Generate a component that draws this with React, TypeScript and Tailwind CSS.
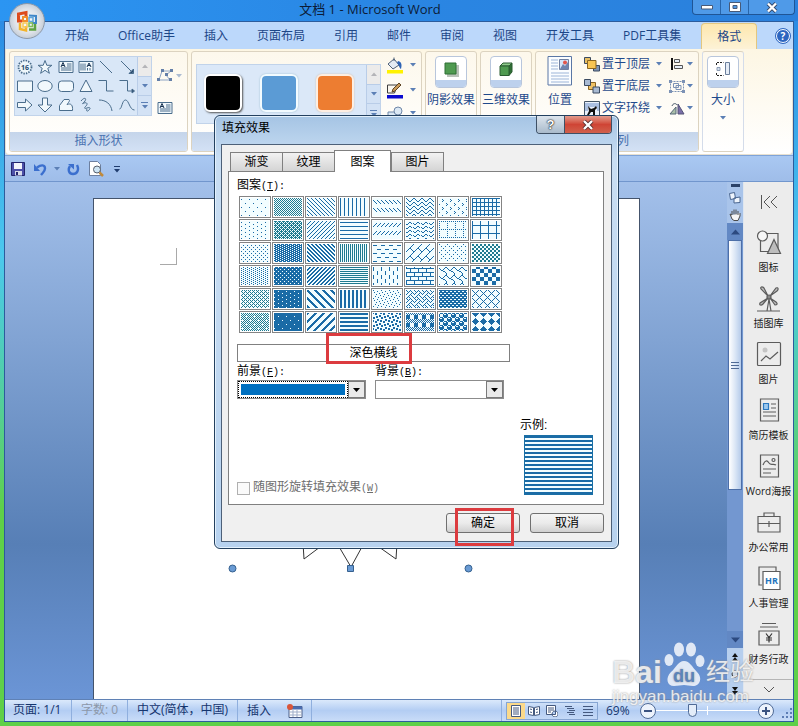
import { useId, useState, type ReactNode } from "react";
import clsx from "clsx";

const uiFont = "font-['Open_Sans','Noto_Sans_CJK_SC',sans-serif]";

const ribbonTabs = [
  "开始",
  "Office助手",
  "插入",
  "页面布局",
  "引用",
  "邮件",
  "审阅",
  "视图",
  "开发工具",
  "PDF工具集",
];

// 8x8 hatch bitmaps, one byte per row, listed in the order of the picker rows
const hatches: { name: string; rows: number[]; teal?: boolean }[] = [
  { name: "5%", rows: [0x00, 0x80, 0x00, 0x00, 0x00, 0x08, 0x00, 0x00] },
  { name: "50%", rows: [0xaa, 0x55, 0xaa, 0x55, 0xaa, 0x55, 0xaa, 0x55], teal: true },
  { name: "浅色下对角线", rows: [0x88, 0x44, 0x22, 0x11, 0x88, 0x44, 0x22, 0x11] },
  { name: "浅色竖线", rows: [0x88, 0x88, 0x88, 0x88, 0x88, 0x88, 0x88, 0x88] },
  { name: "下对角虚线", rows: [0x00, 0x00, 0x88, 0x44, 0x22, 0x11, 0x00, 0x00] },
  { name: "之字形", rows: [0x81, 0x42, 0x24, 0x18, 0x81, 0x42, 0x24, 0x18] },
  { name: "草皮", rows: [0x00, 0x10, 0x08, 0x10, 0x00, 0x01, 0x80, 0x01] },
  { name: "小网格", rows: [0xff, 0x88, 0x88, 0x88, 0xff, 0x88, 0x88, 0x88] },

  { name: "10%", rows: [0x00, 0x80, 0x00, 0x08, 0x00, 0x80, 0x00, 0x08] },
  { name: "60%", rows: [0xee, 0x55, 0xbb, 0x55, 0xee, 0x55, 0xbb, 0x55], teal: true },
  { name: "浅色上对角线", rows: [0x11, 0x22, 0x44, 0x88, 0x11, 0x22, 0x44, 0x88] },
  { name: "浅色横线", rows: [0x00, 0xff, 0x00, 0x00, 0x00, 0xff, 0x00, 0x00] },
  { name: "上对角虚线", rows: [0x00, 0x00, 0x11, 0x22, 0x44, 0x88, 0x00, 0x00] },
  { name: "波浪线", rows: [0x00, 0x18, 0x25, 0xc0, 0x00, 0x18, 0x25, 0xc0] },
  { name: "虚线网格", rows: [0xaa, 0x00, 0x80, 0x00, 0x80, 0x00, 0x80, 0x00] },
  { name: "大网格", rows: [0x80, 0x80, 0x80, 0x80, 0xff, 0x80, 0x80, 0x80] },

  { name: "20%", rows: [0x00, 0x22, 0x00, 0x88, 0x00, 0x22, 0x00, 0x88] },
  { name: "70%", rows: [0xdd, 0x77, 0xdd, 0x77, 0xdd, 0x77, 0xdd, 0x77] },
  { name: "深色下对角线", rows: [0xcc, 0x66, 0x33, 0x99, 0xcc, 0x66, 0x33, 0x99] },
  { name: "窄竖线", rows: [0xaa, 0xaa, 0xaa, 0xaa, 0xaa, 0xaa, 0xaa, 0xaa], teal: true },
  { name: "横虚线", rows: [0x00, 0xf0, 0x00, 0x00, 0x00, 0x0f, 0x00, 0x00] },
  { name: "对角砖形", rows: [0x01, 0x02, 0x04, 0x08, 0x18, 0x24, 0x42, 0x81] },
  { name: "点式菱形", rows: [0x80, 0x00, 0x22, 0x00, 0x08, 0x00, 0x22, 0x00] },
  { name: "小棋盘", rows: [0xcc, 0xcc, 0x33, 0x33, 0xcc, 0xcc, 0x33, 0x33], teal: true },

  { name: "25%", rows: [0x22, 0x88, 0x22, 0x88, 0x22, 0x88, 0x22, 0x88] },
  { name: "75%", rows: [0x77, 0xff, 0xdd, 0xff, 0x77, 0xff, 0xdd, 0xff] },
  { name: "深色上对角线", rows: [0x33, 0x66, 0xcc, 0x99, 0x33, 0x66, 0xcc, 0x99] },
  { name: "窄横线", rows: [0xff, 0x00, 0xff, 0x00, 0xff, 0x00, 0xff, 0x00], teal: true },
  { name: "竖虚线", rows: [0x80, 0x80, 0x80, 0x80, 0x08, 0x08, 0x08, 0x08] },
  { name: "横向砖形", rows: [0x80, 0xff, 0x08, 0x08, 0x08, 0xff, 0x80, 0x80] },
  { name: "瓦形", rows: [0x03, 0x84, 0x48, 0x30, 0x0c, 0x02, 0x01, 0x01] },
  { name: "大棋盘", rows: [0x0f, 0x0f, 0xf0, 0xf0, 0xf0, 0xf0, 0x0f, 0x0f] },

  { name: "30%", rows: [0x55, 0x88, 0x55, 0x22, 0x55, 0x88, 0x55, 0x22], teal: true },
  { name: "80%", rows: [0xff, 0xf7, 0xff, 0x7f, 0xff, 0xf7, 0xff, 0x7f] },
  { name: "宽下对角线", rows: [0xc1, 0xe0, 0x70, 0x38, 0x1c, 0x0e, 0x07, 0x83] },
  { name: "深色竖线", rows: [0xcc, 0xcc, 0xcc, 0xcc, 0xcc, 0xcc, 0xcc, 0xcc] },
  { name: "小纸屑", rows: [0x80, 0x08, 0x40, 0x02, 0x10, 0x01, 0x20, 0x04] },
  { name: "编织物", rows: [0x88, 0x54, 0x22, 0x45, 0x88, 0x14, 0x22, 0x51] },
  { name: "棚架", rows: [0xff, 0x66, 0xff, 0x99, 0xff, 0x66, 0xff, 0x99] },
  { name: "轮廓式菱形", rows: [0x82, 0x44, 0x28, 0x10, 0x28, 0x44, 0x82, 0x01] },

  { name: "40%", rows: [0xaa, 0x55, 0xaa, 0x51, 0xaa, 0x55, 0xaa, 0x15], teal: true },
  { name: "90%", rows: [0xff, 0xff, 0xff, 0xf7, 0xff, 0xff, 0xff, 0x7f] },
  { name: "宽上对角线", rows: [0xc1, 0x83, 0x07, 0x0e, 0x1c, 0x38, 0x70, 0xe0] },
  { name: "深色横线", rows: [0xff, 0xff, 0x00, 0x00, 0xff, 0xff, 0x00, 0x00] },
  { name: "大纸屑", rows: [0xb1, 0x30, 0x03, 0x1b, 0xd8, 0xc0, 0x0c, 0x8d] },
  { name: "苏格兰方格呢", rows: [0xaa, 0x55, 0xf0, 0xf0, 0xf0, 0xf0, 0xaa, 0x55] },
  { name: "球体", rows: [0x77, 0x89, 0x8f, 0x8f, 0x77, 0x98, 0xf8, 0xf8] },
  { name: "实心菱形", rows: [0xfe, 0x7c, 0x38, 0x10, 0x00, 0x10, 0x38, 0x7c] },
];

function Hatch({ rows, teal }: { rows: number[]; teal?: boolean }) {
  const id = useId();
  let d = "";
  rows.forEach((row, y) => {
    for (let x = 0; x < 8; x++) {
      if (row & (0x80 >> x)) d += `M${x} ${y}h1v1h-1z`;
    }
  });
  return (
    <svg className="block h-full w-full" shapeRendering="crispEdges">
      <pattern id={id} width="8" height="8" patternUnits="userSpaceOnUse">
        <rect width="8" height="8" fill="#f2fdff" />
        <path d={d} fill={teal ? "#1f7a90" : "#1a6ba6"} />
      </pattern>
      <rect width="100%" height="100%" fill={`url(#${id})`} />
    </svg>
  );
}

function Caret({ className }: { className?: string }) {
  return (
    <svg className={clsx("shrink-0", className)} width="6" height="4" viewBox="0 0 6 4">
      <path d="M0 0h6L3 3.6z" fill="#5b7fb5" />
    </svg>
  );
}

function Group({ className, label, children }: { className: string; label?: string; children: ReactNode }) {
  return (
    <section
      className={clsx(
        "flex shrink-0 flex-col overflow-hidden rounded-[3px] border border-[#dcd3c0] bg-linear-to-b from-[#fdf8ec] to-white",
        className,
      )}
    >
      <div className="flex-1">{children}</div>
      {label !== undefined && (
        <div className="h-[19px] bg-linear-to-b from-[#c5d5ea] to-[#d3e1f5] text-center leading-[18px] text-[#4a72b0]">
          {label}
        </div>
      )}
    </section>
  );
}

function GalleryScroll() {
  return (
    <div className="flex w-[14px] flex-col border-l border-[#b9cde8]">
      <button aria-label="上一行" className="flex flex-1 items-center justify-center bg-[#ecebea]">
        <svg width="6" height="4" viewBox="0 0 6 4">
          <path d="M0 4h6L3 .4z" fill="#b4b4b8" />
        </svg>
      </button>
      <button aria-label="下一行" className="flex flex-1 items-center justify-center border-y border-[#b9cde8] bg-[#d3e2f5]">
        <Caret />
      </button>
      <button aria-label="更多" className="flex flex-1 flex-col items-center justify-center gap-[2px] bg-[#d3e2f5]">
        <span className="h-px w-[7px] bg-[#5b7fb5]" />
        <Caret />
      </button>
    </div>
  );
}

const shapes: { name: string; art: ReactNode }[] = [
  {
    name: "十六角星",
    art: (
      <>
        <circle cx="8" cy="8" r="6.4" strokeWidth="2" strokeDasharray="1.4 1.1" />
        <circle cx="8" cy="8" r="5.4" fill="#eef7fb" stroke="none" />
        <text x="8" y="10.8" fontSize="7" fontWeight="bold" textAnchor="middle" fill="#26476b" stroke="none">
          16
        </text>
      </>
    ),
  },
  { name: "五角星", art: <path d="M8 1.5l1.8 4.8h5.1l-4.1 3 1.6 5L8 11.3l-4.4 3 1.6-5-4.1-3h5.1z" /> },
  {
    name: "文本框",
    art: (
      <>
        <path d="M1 2.5h14v11H1zM9 5h4.5M9 7h4.5M3 9h10.5M3 11h10.5" />
        <path d="M3 8l2-4.5L7 8M3.8 6.5h2.4" stroke="#16304f" />
      </>
    ),
  },
  {
    name: "竖排文本框",
    art: (
      <>
        <path d="M1 2.5h14v11H1zM3 4.5v7M5 4.5v7M7 4.5v7M9.5 9v2.5M12 9v2.5" />
        <path d="M9 8l2-4L13 8M9.8 6.5h2.4" stroke="#16304f" />
      </>
    ),
  },
  { name: "直线", art: <path d="M2 2l12 12" fill="none" /> },
  { name: "箭头", art: <path d="M2 2l12 12M14.5 10v4.5H10z" fill="#26476b" /> },
  { name: "矩形", art: <path d="M.5 3h15v10.5H.5z" /> },
  { name: "椭圆", art: <ellipse cx="8" cy="8" rx="7.2" ry="5.5" /> },
  { name: "圆角矩形", art: <rect x=".5" y="3" width="15" height="10.5" rx="3" /> },
  { name: "三角形", art: <path d="M8 2L14 13.5H2z" /> },
  { name: "肘形连接符", art: <path d="M.5 2.5h8V13h7" fill="none" /> },
  {
    name: "肘形箭头",
    art: (
      <>
        <path d="M.5 2.5h8V13h5" fill="none" />
        <path d="M13 11v4l2.5-2z" fill="#26476b" />
      </>
    ),
  },
  { name: "右箭头", art: <path d="M.5 5.5h8V2L15 8l-6.5 6v-3.5h-8z" /> },
  { name: "下箭头", art: <path d="M5.5 1h5v7H15l-7 7-7-7h4.5z" /> },
  { name: "任意多边形", art: <path d="M1.5 13.5v-5L6 2.5h5c1.500 1-1 3.500-2 5 4-1.500 6 .5 5.500 6z" /> },
  {
    name: "自由曲线",
    art: <path d="M3 4c3-4 6-3 4 0s-4 3-1 2 4 1 2 3-2 3 1 2 4 0 2 2-3 1-2-1" fill="none" />,
  },
  { name: "弧形", art: <path d="M1 3c7 0 12 4 13 11" fill="none" /> },
  { name: "曲线", art: <path d="M.5 12C3 12 3 3 6.500 3s4 10 9 10" fill="none" /> },
];

function ShapeIcon({ children }: { children: ReactNode }) {
  return (
    <svg className="block" width="16" height="16" viewBox="0 0 16 16" fill="#f1f8fc" stroke="#4a6d8c" strokeWidth="1">
      {children}
    </svg>
  );
}

function EffectButton({ label, children }: { label: string; children: ReactNode }) {
  return (
    <button className="flex w-full flex-col items-center pt-1 text-[#1f4a8c]">
      <span className="flex h-8 w-8 flex-col items-center overflow-hidden rounded border border-[#b8c6dc] bg-white">
        <span className="flex flex-1 items-center">{children}</span>
        <span className="h-[7px] w-full bg-[#bdd1ed]" />
      </span>
      <span className="mt-1 leading-4 whitespace-nowrap">{label}</span>
    </button>
  );
}

function StackIcon({ front }: { front: boolean }) {
  return (
    <svg width="16" height="16" viewBox="0 0 16 16" stroke="#3b4a60">
      {front ? (
        <>
          <path d="M.5 1.5h6v6h-6z" fill="#e6bd62" />
          <path d="M9.5 9.5h6v5.5h-6z" fill="#8094b5" />
          <path d="M3.5 4.5H12v8H3.5z" fill="#f9c552" stroke="#8a6420" />
        </>
      ) : (
        <>
          <path d="M4.500 4.500h7v7h-7z" fill="#f0c264" stroke="#8a6420" />
          <path d="M.5 1.500h6v6h-6zM9 9h6.500v6H9z" fill="#a9bad2" />
        </>
      )}
    </svg>
  );
}

function ArrangeRow({ icon, label, tool }: { icon: ReactNode; label: string; tool: ReactNode }) {
  return (
    <div className="flex h-[22px] items-center text-[#1f4a8c]">
      <button className="flex w-[85px] items-center gap-[2px] whitespace-nowrap">
        {icon}
        <span>{label}</span>
        <Caret className="ml-1" />
      </button>
      <button className="flex items-center gap-[2px]" aria-label={label + "选项"}>
        <span className="flex w-4 justify-center">{tool}</span>
        <Caret />
      </button>
    </div>
  );
}

function Ribbon() {
  return (
    <div className="flex h-[106px] gap-[3px] rounded-b border border-t-0 border-[#e7e0d0] bg-linear-to-b from-[#fdf6e3] to-white px-[3px] pt-[2px] pb-[2px]">
      <Group className="w-[179px]" label="插入形状">
        <div className="flex px-1 pt-1">
          <div className="flex h-[60px] w-[138px] border border-[#c1d3ea] bg-[#d9e7f7]">
            <div className="grid flex-1 grid-cols-6 place-items-center">
              {shapes.map((s) => (
                <button key={s.name} aria-label={s.name}>
                  <ShapeIcon>{s.art}</ShapeIcon>
                </button>
              ))}
            </div>
            <GalleryScroll />
          </div>
          <div className="flex flex-col gap-[17px] pt-3 pl-[5px]">
            <button className="flex items-center gap-[2px]" aria-label="编辑形状">
              <svg width="17" height="15" viewBox="0 0 17 15" fill="#647fa8">
                <path d="M5 3h9M14 3L9 7l4 5M2 12L5 3M2 12h11" stroke="#8ea4c4" fill="none" />
                <path d="M4 1h3v3H4zM13 1h3v3h-3zM8 5h3v3H8zM0 10h3v3H0zM12 10h3v3h-3z" />
              </svg>
              <Caret className="opacity-50" />
            </button>
            <button aria-label="文本框">
              <ShapeIcon>{shapes[2].art}</ShapeIcon>
            </button>
          </div>
        </div>
      </Group>

      <Group className="w-[231px]" label="形状样式">
        <div className="flex px-1 pt-3">
          <div className="flex h-[60px] w-[185px] border border-[#c1d3ea] bg-[#dbe8f8]">
            <div className="flex flex-1 items-start gap-[18px] pt-[9px] pl-[7px]">
              <button aria-label="黑色" className="h-[38px] w-[38px] rounded-md border-2 border-white bg-black shadow-[1px_1px_2px_#555]" />
              <button aria-label="蓝色" className="h-[38px] w-[38px] rounded-md border-2 border-[#f2fbff] bg-[#5b9bd5] shadow-[0_0_2px_#9bc]" />
              <button aria-label="橙色" className="h-[38px] w-[38px] rounded-md border-2 border-[#fdeee2] bg-[#ed7d31] shadow-[0_0_2px_#cba]" />
            </div>
            <GalleryScroll />
          </div>
          <div className="-mt-2 flex flex-col gap-[7px] pl-[5px]">
            <button className="flex items-center gap-[6px]" aria-label="形状填充">
              <svg width="18" height="18" viewBox="0 0 18 18">
                <path d="M2 8l6-5 5 6-6 4z" fill="#e4ebf3" stroke="#4f6078" />
                <path d="M8 5V1.5" stroke="#4f6078" />
                <path d="M12 5c4 1 4 4 3 8-2-1-2-5-4-6z" fill="#2f64b5" />
                <path d="M1 14h16v3.5H1z" fill="#fff200" />
              </svg>
              <Caret />
            </button>
            <button className="flex items-center gap-[6px]" aria-label="形状轮廓">
              <svg width="18" height="18" viewBox="0 0 18 18">
                <path d="M1.5 4h10l-3 8h-7z" fill="#fbf7ee" stroke="#3d3d3d" />
                <path d="M6 11l1-3 6-6 2 2-6 6z" fill="#c89a5a" stroke="#5c4322" />
                <path d="M1 14h16v3.5H1z" fill="#0a0ad0" />
              </svg>
              <Caret />
            </button>
            <button className="flex items-center gap-[6px]" aria-label="更改形状">
              <svg width="18" height="14" viewBox="0 0 18 14" fill="#dbe8f4" stroke="#6f87a8">
                <path d="M2 6h8v7H2z" />
                <circle cx="12" cy="5" r="4" />
              </svg>
              <Caret />
            </button>
          </div>
        </div>
      </Group>

      <Group className="w-[52px]" label="">
        <EffectButton label="阴影效果">
          <svg width="16" height="16" viewBox="0 0 16 16">
            <path d="M4 4h12v12H4z" fill="#b9c2b9" />
            <path d="M2 2h11v11H2z" fill="#4f9a50" stroke="#2f6e35" />
          </svg>
        </EffectButton>
      </Group>
      <Group className="w-[52px]" label="">
        <EffectButton label="三维效果">
          <svg width="16" height="16" viewBox="0 0 16 16" stroke="#2a5c30">
            <path d="M2 5l3-3h9l-3 3z" fill="#8fca8b" />
            <path d="M11 5l3-3v9l-3 3.5z" fill="#2f6e35" />
            <path d="M2 5h9v9.5H2z" fill="#4f9a50" />
          </svg>
        </EffectButton>
      </Group>

      <Group className="w-[164px]" label="排列">
        <div className="flex">
          <button className="flex w-[48px] flex-col items-center pt-1 text-[#1f4a8c]">
            <svg width="26" height="30" viewBox="0 0 26 30">
              <path d="M1 .5h23.5V29H1z" fill="#fbfdff" stroke="#5a77a5" />
              <path d="M4 4h7M4 7h7M4 10h7M4 13h7M4 17h18M4 20h18M4 23h18M4 26h18" stroke="#9db5d8" />
              <path d="M12.5 3.5h9v10h-9z" fill="#d5e6f8" stroke="#6f7fa0" />
              <path d="M13 13l3-5 2 2 3-4v7z" fill="#6f86b0" />
              <circle cx="18" cy="6.5" r="2" fill="#e2574c" />
            </svg>
            <span className="mt-1 leading-5">位置</span>
          </button>
          <div className="pt-[1px]">
            <ArrangeRow
              icon={<StackIcon front />}
              label="置于顶层"
              tool={
                <svg width="12" height="14" viewBox="0 0 12 14">
                  <path d="M1 1v12" stroke="#111" strokeWidth="2" />
                  <path d="M3.5 2.5h5v3h-5zM3.5 8.5h8v3h-8z" fill="#e7eef8" stroke="#555" />
                </svg>
              }
            />
            <ArrangeRow
              icon={<StackIcon front={false} />}
              label="置于底层"
              tool={
                <svg width="16" height="15" viewBox="0 0 16 15" fill="none" stroke="#7c92b5">
                  <path d="M1.5 2.5h13v10h-13z" strokeDasharray="2 1" />
                  <path d="M4.5 4.5h5v4h-5zM7 6.500h5v4H7z" />
                  <path d="M0 1h3v3H0zM13 1h3v3h-3zM0 11h3v3H0zM13 11h3v3h-3z" fill="#7c92b5" stroke="none" />
                </svg>
              }
            />
            <ArrangeRow
              icon={
                <svg width="16" height="16" viewBox="0 0 16 16">
                  <path d="M.5 1.5h15v14H.5z" fill="#eaf1fb" stroke="#456" />
                  <path d="M1 4h14M1 6h14M1 8h3M13 8h2M1 10h3M13 10h2" stroke="#6d8fc8" />
                  <path d="M4 6l3 3 3-1 2-2 1 2-2 2v5H9v-3H7l-2 3H3l2-4z" fill="#111" />
                </svg>
              }
              label="文字环绕"
              tool={
                <svg width="16" height="13" viewBox="0 0 16 13">
                  <path d="M1 12l6-7v7z" fill="#a9bfa9" stroke="#567" />
                  <path d="M9 2l6 10H9z" fill="#7a6ea8" stroke="#557" />
                  <path d="M3 4c1-3 4-3 5-1" fill="none" stroke="#456" />
                </svg>
              }
            />
          </div>
        </div>
      </Group>

      <Group className="w-[42px] border-x-[#d4dcea]">
        <EffectButton label="大小">
          <svg width="16" height="17" viewBox="0 0 16 17" fill="none" stroke="#222">
            <path d="M1.5 5V2.5h7M1.5 13v2.5h7" strokeDasharray="2 1" />
            <path d="M2 7.5h3v3H2z" stroke="#8c9cb5" fill="#d6e0ee" />
            <path d="M10.5 2.5h4v12h-4z" stroke="#6b7f9c" fill="#e6edf7" />
          </svg>
        </EffectButton>
        <Caret className="mx-auto mt-2" />
      </Group>
    </div>
  );
}

function OfficeOrb() {
  return (
    <button
      aria-label="Office 按钮"
      className="absolute top-[3px] left-[9px] flex h-9 w-9 items-center justify-center rounded-full border border-[#8c98a8] bg-radial from-white via-[#dfe3e9] to-[#a9b4c2]"
    >
      <svg width="26" height="26" viewBox="0 0 26 26" fill="none" strokeWidth="3">
        <path d="M12 8V4.5L4.5 6v7H8" stroke="#dd4a1c" />
        <path d="M9 9h4v4H9z" stroke="#f0902e" strokeWidth="2" />
        <path d="M15 7.5l7 .5v7h-4" stroke="#3f86c8" strokeWidth="2" />
        <path d="M15 9.5h4v4h-4z" stroke="#5fa6dd" strokeWidth="1.5" />
        <path d="M6 15v6l6 1.5V18" stroke="#f3b32a" strokeWidth="2.5" />
        <path d="M9 15h4v4H9z" stroke="#f7c953" strokeWidth="1.5" />
        <path d="M15 21.5h6V16" stroke="#5fa342" strokeWidth="2.5" />
        <path d="M15 15h3.5v3.5H15z" stroke="#7fbb55" strokeWidth="1.5" />
      </svg>
    </button>
  );
}

function TitleBar() {
  return (
    <header className="flex h-[21px] justify-end bg-linear-to-r from-[#2b95f2] via-[#2a86e3] to-[#2a80dc]">
      <h1 className="flex-1 pr-[70px] pl-3 text-center text-[13px] leading-[18px] text-[#0c1c38]">文档 1 - Microsoft Word</h1>
      <div className="absolute top-0 right-[3px] flex h-[15px] w-[103px] overflow-hidden rounded-b border border-t-0 border-[#1f5596] bg-[#4f9ae8]">
        <button aria-label="最小化" className="flex w-[28px] items-center justify-center border-r border-[#2866ab]">
          <svg width="12" height="5" viewBox="0 0 12 5">
            <path d="M.5.5h11V4H.5z" fill="#fff" stroke="#475a78" />
          </svg>
        </button>
        <button aria-label="还原" className="flex w-[28px] items-center justify-center border-r border-[#2866ab]">
          <svg width="12" height="10" viewBox="0 0 12 10">
            <path d="M.5.5h11v9H.5z" fill="#fff" stroke="#475a78" />
            <path d="M4 3.500h4v3H4z" fill="#4f9ae8" stroke="#475a78" />
          </svg>
        </button>
        <button aria-label="关闭" className="flex flex-1 items-center justify-center">
          <svg width="12" height="11" viewBox="0 0 12 11">
            <path d="M2 1.5l8 8M10 1.5l-8 8" stroke="#34486a" strokeWidth="4" />
            <path d="M2 1.5l8 8M10 1.5l-8 8" stroke="#fff" strokeWidth="2.4" />
          </svg>
        </button>
      </div>
    </header>
  );
}

function QuickAccess() {
  return (
    <div className="flex h-[27px] items-center border-y border-t-[#7ea3d8] border-b-[#7196cd] bg-linear-to-b from-[#a9c8f2] to-[#9fbde9] pt-px pl-[6px]">
      <button aria-label="保存">
        <svg width="14" height="14" viewBox="0 0 14 14">
          <path d="M.5.5h13v13H.5z" fill="#4c50a8" stroke="#23266e" />
          <path d="M3 1h8v6H3z" fill="#f3f5fb" />
          <path d="M4 9h7v4.5H4z" fill="#d7dbea" />
          <path d="M5 10h2v3H5z" fill="#23266e" />
        </svg>
      </button>
      <button aria-label="撤消" className="ml-[9px] flex items-center gap-[7px]">
        <svg width="13" height="13" viewBox="0 0 13 13" fill="none" stroke="#3b6fce" strokeWidth="2.4">
          <path d="M3 4.500c4-3 8-3 8 1 0 3-2 4-4 6.500" />
          <path d="M0 1v7h6z" fill="#3b6fce" stroke="none" />
        </svg>
        <Caret />
      </button>
      <button aria-label="恢复" className="ml-[7px]">
        <svg width="13" height="13" viewBox="0 0 13 13" fill="none" stroke="#3b6fce" strokeWidth="2.4">
          <path d="M3 3c-2.500 4-1 8 3 8s6.500-4 4-9" />
          <path d="M1 1h6v5.500z" fill="#3b6fce" stroke="none" />
        </svg>
      </button>
      <button aria-label="打印预览" className="ml-[9px]">
        <svg width="15" height="16" viewBox="0 0 15 16">
          <path d="M.5.5h8l3 3v11H.5z" fill="#fff" stroke="#6c7f9f" />
          <circle cx="8" cy="8.5" r="3.5" fill="#cfe6f5" stroke="#555d6b" />
          <path d="M10.5 11.5L14 15" stroke="#c08a3c" strokeWidth="2.5" />
        </svg>
      </button>
      <button aria-label="自定义快速访问工具栏" className="ml-[10px] flex flex-col items-center gap-[2px]">
        <span className="h-px w-[6px] bg-[#1f3c6e]" />
        <svg width="6" height="4" viewBox="0 0 6 4">
          <path d="M0 0h6L3 3.6z" fill="#1f3c6e" />
        </svg>
      </button>
    </div>
  );
}

const paneItems: { label: string; art: ReactNode }[] = [
  {
    label: "图标",
    art: (
      <>
        <path d="M11 4.5h11v18H4.5V12" />
        <circle cx="6.5" cy="7" r="5" fill="#f6f6f6" />
        <path d="M18 10.5l6.500 14h-13z" fill="#bdbdbd" />
      </>
    ),
  },
  {
    label: "插图库",
    art: (
      <>
        <path d="M1 26h23M11 26l2-12 2 12" />
        <path
          d="M12 11L5 4c-1-2 1-3 3-1zM14 11l6-8c2-1 3 1 1 3zM12 13l-8 5c-1 2 1 3 3 1zM14 13l6 4c2 2 1 3-1 3z"
          fill="#bdbdbd"
        />
        <circle cx="13" cy="12" r="2" fill="#888" />
      </>
    ),
  },
  {
    label: "图片",
    art: (
      <>
        <rect x="1.5" y="1.5" width="23" height="23" rx="1" />
        <circle cx="9" cy="9" r="2.5" fill="#c4c4c4" stroke="none" />
        <path d="M5 20l5-5 4 3 8-7" />
      </>
    ),
  },
  {
    label: "简历模板",
    art: (
      <>
        <path d="M4.5 2h18v22h-18zM15 7h5M15 11h5M7 15h13M7 19h13" />
        <path d="M7.5 6.500h5v6h-5z" fill="#9cc8ee" stroke="#2b78c0" />
      </>
    ),
  },
  {
    label: "Word海报",
    art: (
      <>
        <path d="M4.5 2h18v22h-18zM7 16h13M7 20h8" />
        <path d="M7 12c2-5 4-5 6-2s4 0 7 2" />
        <circle cx="17.5" cy="7" r="1.5" />
      </>
    ),
  },
  {
    label: "办公常用",
    art: <path d="M2 7.5h22v7H2zM2 14.5V23h22v-8.500M8 7V4h10v3M11 14.5h4M13 12v6" />,
  },
  {
    label: "人事管理",
    art: (
      <>
        <path d="M6 20H3V2h17v4" />
        <path d="M7 6.5h17v18H7z" fill="#fff" />
        <text x="15.5" y="19" fontSize="9" fontWeight="bold" textAnchor="middle" fill="#1f74bd" stroke="none">
          HR
        </text>
      </>
    ),
  },
  {
    label: "财务行政",
    art: (
      <>
        <path d="M6 2.5h14M4 6h18M3 10h20v14H3z" />
        <path d="M10 12.5l3 4 3-4M13 16.5v5M10 17h6M10 19h6" stroke="#333" />
      </>
    ),
  },
];

function SidePane() {
  return (
    <aside className="flex w-[50px] shrink-0 flex-col items-center border-l border-[#dfe6ef] bg-[#ececec] text-[10px] text-[#1a1a1a]">
      <button aria-label="收起" className="mt-3 mb-[15px]">
        <svg width="18" height="16" viewBox="0 0 18 16" fill="none" stroke="#555">
          <path d="M1.5 1v14M10 2L4 8l6 6M17 2l-6 6 6 6" />
        </svg>
      </button>
      {paneItems.map((item) => (
        <button key={item.label} className="flex h-14 w-full shrink-0 flex-col items-center leading-[14px] whitespace-nowrap">
          <svg className="my-1" width="26" height="27" viewBox="0 0 26 27" fill="none" stroke="#5c5c5c" strokeWidth="1.2">
            {item.art}
          </svg>
          {item.label}
        </button>
      ))}
      <button aria-label="向下滚动" className="mt-auto flex h-[20px] w-full items-center justify-center border-t border-[#b5b5b5]">
        <svg width="12" height="8" viewBox="0 0 12 8" fill="none" stroke="#555">
          <path d="M1 1l5 5 5-5" />
        </svg>
      </button>
    </aside>
  );
}

function ScrollColumn() {
  return (
    <div className="flex w-[16px] shrink-0 flex-col items-center bg-[#a9c4ea]">
      <span className="mt-[2px] h-[3px] w-[9px] bg-[#2b4268]" />
      <button aria-label="标尺" className="mt-1">
        <svg width="12" height="13" viewBox="0 0 12 13" fill="#eef4fc" stroke="#4a6690">
          <path d="M.5 2.5l5-1 1 6-5 1zM5 7l6-1v5.500L5 12z" />
        </svg>
      </button>
      <button aria-label="浏览" className="mt-1">
        <svg width="12" height="13" viewBox="0 0 12 13" fill="#f6f6f6" stroke="#4c4c4c">
          <path d="M3 7V3M5 6.5v-5M7 6.5v-5M9 7V3M3 7L1 6l2 5 2 1.500h4L11 8V5" />
        </svg>
      </button>
      <button aria-label="向上" className="mt-[2px] flex h-[17px] w-full items-center justify-center bg-[#6288c4]">
        <svg width="9" height="6" viewBox="0 0 9 6">
          <path d="M0 5.5h9L4.5.5z" fill="#2c4a80" />
        </svg>
      </button>
      <div className="flex w-full flex-1 flex-col items-center bg-[#7397d0]">
        <div className="flex h-[64%] w-[14px] flex-col items-center justify-center gap-[2px] border border-[#4d6fa8] bg-linear-to-r from-white via-[#dce7f6] to-[#b5cbea]">
          <span className="h-px w-2 bg-[#4f6a95]" />
          <span className="h-px w-2 bg-[#4f6a95]" />
          <span className="h-px w-2 bg-[#4f6a95]" />
        </div>
      </div>
      <button aria-label="向下" className="flex h-[17px] w-full items-center justify-center bg-[#6288c4]">
        <svg width="9" height="6" viewBox="0 0 9 6">
          <path d="M0 .5h9l-4.5 5z" fill="#2c4a80" />
        </svg>
      </button>
      <div className="flex h-[51px] w-full flex-col items-center justify-around bg-[#b7cfee]">
        <button aria-label="前一页">
          <svg className="block" width="6" height="8" viewBox="0 0 6 8">
            <path d="M0 4h6L3 0zM0 8h6L3 4z" fill="#111" />
          </svg>
        </button>
        <button aria-label="选择浏览对象">
          <svg className="block" width="8" height="8" viewBox="0 0 8 8">
            <circle cx="4" cy="4" r="3" fill="#dce8f8" stroke="#333" />
          </svg>
        </button>
        <button aria-label="下一页">
          <svg className="block" width="6" height="8" viewBox="0 0 6 8">
            <path d="M0 0h6L3 4zM0 4h6L3 8z" fill="#111" />
          </svg>
        </button>
      </div>
    </div>
  );
}

function Workspace() {
  return (
    <div className="flex flex-1">
      <div className="flex min-w-0 flex-1 bg-linear-to-b from-[#a3c0ea] via-[#577fb6] via-70% to-[#6b95d6] pt-4 pr-[87px] pl-[88px]">
        <main className="relative flex-1 border border-b-0 border-[#44546c] bg-white">
          <div className="mt-[49px] ml-[66px] h-[17px] w-[17px] border-r border-b border-[#a9a9a9]" />
          {/* bottom of the selected star with its handles */}
          <svg className="absolute top-[340px] left-[134px]" width="246" height="36" viewBox="0 0 246 36" fill="none" stroke="#333">
            <path d="M75 4l1 16 16-12M110 6l13 22 12-22M151 8l17 12 1-16" />
            <circle cx="4.5" cy="29.5" r="3.5" fill="#6a9bd4" stroke="#36618f" />
            <circle cx="240.5" cy="29.5" r="3.5" fill="#6a9bd4" stroke="#36618f" />
            <path d="M119.5 26.5h6v6h-6z" fill="#6a9bd4" stroke="#36618f" />
          </svg>
        </main>
      </div>
      <ScrollColumn />
      <SidePane />
    </div>
  );
}

const viewButtons: { name: string; d: string }[] = [
  { name: "页面视图", d: "M1.5.5h9v11h-9zM3 3h6M3 5h6M3 7h6M3 9h6" },
  { name: "阅读版式", d: "M.5 1.5l5 1v8l-5-1zM11.5 1.5l-5 1v8l5-1zM2 4l2 .5M2 7l2 .5M8 4.5l2-.5M8 7.5l2-.5" },
  { name: "Web 版式", d: "M.5.5h9v9h-9zM2 3h6M2 5h6M2 7h3M9 6a3 3 0 1 0 .1 0" },
  { name: "大纲视图", d: "M1 1.5h7M3 3.5h7M5 5.5h6M3 7.5h7M5 9.5h6" },
  { name: "普通视图", d: "M1 1.5h10M1 4.5h10M1 7.5h10M1 10.5h10" },
];

function StatusBar() {
  const [zoom, setZoom] = useState(34);
  return (
    <footer className="flex h-[22px] shrink-0 items-stretch border-t border-[#5f81b5] bg-linear-to-b from-[#dbe9fb] via-[#b3cdf3] to-[#c9dcf8] leading-[20px] whitespace-nowrap text-[#15356e]">
      <span className="w-[67px] border-r border-[#8fafde] pl-2">页面: 1/1</span>
      <span className="w-[56px] border-r border-[#8fafde] pl-[9px] text-[#8c97a8]">字数: 0</span>
      <span className="w-[110px] border-r border-[#8fafde] pl-[9px]">中文(简体，中国)</span>
      <span className="flex w-[74px] items-center gap-4 border-r border-[#8fafde] pl-[9px]">
        插入
        <svg width="16" height="14" viewBox="0 0 16 14">
          <path d="M2 2.5h13v11H2z" fill="#fff" stroke="#4a5e88" />
          <path d="M2 2.5h13v3H2z" fill="#4a6cb0" />
          <path d="M3 8h11M3 11h11M6 6v7M10 6v7" stroke="#9dadc8" />
          <circle cx="3" cy="3" r="3" fill="#d9553a" />
        </svg>
      </span>
      <div className="ml-auto flex items-center border-l border-[#8fafde] pl-1">
        <div className="flex h-[18px] border border-[#86a5d2]">
          {viewButtons.map((v, i) => (
            <button
              key={v.name}
              aria-label={v.name}
              className={clsx("flex w-[18px] items-center justify-center", i === 0 && "bg-[#fbd98a]")}
            >
              <svg width="12" height="12" viewBox="0 0 12 12" fill={i < 3 ? "#fff" : "none"} stroke="#44597f">
                <path d={v.d} />
              </svg>
            </button>
          ))}
        </div>
        <button className="ml-2 w-[26px] text-left">69%</button>
        <button aria-label="缩小" className="ml-2 flex h-4 w-4 items-center justify-center rounded-full border border-[#4f6a96] bg-[#edf3fc]">
          <span className="h-[2px] w-2 bg-[#3b5380]" />
        </button>
        <div className="relative flex w-[102px] items-center">
          <span className="absolute left-1/2 h-[9px] w-px bg-white" />
          <input
            type="range"
            aria-label="显示比例"
            value={zoom}
            onChange={(e) => setZoom(Number(e.target.value))}
            className="h-px w-full appearance-none bg-white [&::-webkit-slider-thumb]:h-[13px] [&::-webkit-slider-thumb]:w-[9px] [&::-webkit-slider-thumb]:appearance-none [&::-webkit-slider-thumb]:rounded-b-full [&::-webkit-slider-thumb]:border [&::-webkit-slider-thumb]:border-[#4f6a96] [&::-webkit-slider-thumb]:bg-[#e4edf9]"
          />
        </div>
        <button aria-label="放大" className="flex h-4 w-4 items-center justify-center rounded-full border border-[#4f6a96] bg-[#edf3fc]">
          <svg width="8" height="8" viewBox="0 0 8 8">
            <path d="M4 0v8M0 4h8" stroke="#3b5380" strokeWidth="2" />
          </svg>
        </button>
        <svg className="mt-[6px] ml-2" width="11" height="12" viewBox="0 0 11 12" fill="#5c7db5">
          <path d="M8 0h2v2H8zM4 4h2v2H4zM8 4h2v2H8zM0 8h2v2H0zM4 8h2v2H4zM8 8h2v2H8z" />
        </svg>
      </div>
    </footer>
  );
}

function Key({ children }: { children: string }) {
  return (
    <span className="font-['Liberation_Mono',monospace] text-[10px]">
      (<u>{children}</u>):
    </span>
  );
}

function ColorSelect({ id, color }: { id: string; color: "blue" | "white" }) {
  return (
    <div className="relative h-[19px] w-[129px] border border-[#8c8c8c] bg-white">
      <select
        id={id}
        className={clsx(
          "block h-full w-[110px] appearance-none p-[2px] outline-none",
          color === "blue" ? "border border-dotted border-black bg-[#0070c0] bg-clip-content text-[#0070c0]" : "bg-white text-white",
        )}
      >
        <option aria-label={color === "blue" ? "蓝色" : "白色"} />
      </select>
      <span className="pointer-events-none absolute top-0 right-0 flex h-[17px] w-[17px] items-center justify-center border border-[#7a7a7a] bg-[#eaeaea]">
        <svg width="7" height="4" viewBox="0 0 7 4">
          <path d="M0 0h7L3.5 4z" fill="#000" />
        </svg>
      </span>
    </div>
  );
}

const dialogTabs = ["渐变", "纹理", "图案", "图片"];

function FillEffectsDialog() {
  const [tab, setTab] = useState("图案");
  const [picked, setPicked] = useState(43);

  return (
    <div
      role="dialog"
      aria-label="填充效果"
      className="absolute top-[115px] left-[214px] w-[405px] rounded-[6px] border border-[#23405f] bg-linear-to-b from-[#a5c4e4] via-[#c9def3] via-10% to-[#b7d2ef] px-[6px] pb-[6px] font-['Liberation_Sans','Noto_Sans_CJK_SC',sans-serif] text-[12px] text-black shadow-[inset_0_0_0_1px_#e4f1fc]"
    >
      <div className="flex h-[28px] items-start justify-between">
        <h2 className="pl-[1px] leading-[25px]">填充效果</h2>
        <div className="flex h-[18px] overflow-hidden rounded-b border border-t-0 border-[#3e5065]">
          <button aria-label="帮助" className="w-[28px] border-r border-[#3e5065] bg-linear-to-b from-[#dde5ed] to-[#a9bacb] text-[13px] leading-[17px] font-bold text-white [text-shadow:0_0_2px_#000,0_0_1px_#000]">
            ?
          </button>
          <button aria-label="关闭" className="flex w-[46px] items-center justify-center bg-linear-to-b from-[#e29a8c] via-[#cf4435] to-[#d0604c]">
            <svg width="12" height="10" viewBox="0 0 12 10">
              <path d="M2 1l8 8M10 1L2 9" stroke="#5a3030" strokeWidth="4" />
              <path d="M2 1l8 8M10 1L2 9" stroke="#fff" strokeWidth="2.4" />
            </svg>
          </button>
        </div>
      </div>

      <div className="border border-[#4d6078] bg-[#f0f0f0] pt-[5px] pr-[7px] pb-2 pl-[6px]">
        <div role="tablist" className="flex items-end pl-[2px]">
          {dialogTabs.map((t) => (
            <button
              key={t}
              role="tab"
              aria-selected={t === tab}
              onClick={() => setTab(t)}
              className={clsx(
                "border border-b-0 border-[#808080]",
                t === tab
                  ? "relative -mb-px h-[22px] w-[57px] bg-white"
                  : "-mr-px h-[19px] w-[53px] bg-linear-to-b from-[#f2f2f2] to-[#d4d4d4]",
              )}
            >
              {t}
            </button>
          ))}
        </div>

        <div className="border border-[#808080] bg-white px-2 pt-1 pb-[7px]">
          <div className="h-[18px] leading-[18px]">
            图案
            <Key>T</Key>
          </div>
          <div className="mt-[2px] ml-[2px] grid w-fit grid-cols-8 gap-px">
            {hatches.map((h, i) => (
              <button
                key={h.name}
                aria-label={h.name}
                onClick={() => setPicked(i)}
                className="h-[22px] w-8 border border-[#848484] bg-white p-px"
              >
                <Hatch rows={h.rows} teal={h.teal} />
              </button>
            ))}
          </div>

          <div className="relative mt-[11px] w-[273px] border border-[#808080] text-center leading-4">
            {hatches[picked].name}
            <span className="absolute -top-[12px] left-[88px] h-[31px] w-[86px] border-3 border-[#dc3b3f]" />
          </div>

          <div className="flex gap-[9px]">
            <div>
              <label htmlFor="foreground" className="block h-[18px] leading-[18px]">
                前景
                <Key>F</Key>
              </label>
              <ColorSelect id="foreground" color="blue" />
            </div>
            <div>
              <label htmlFor="background" className="block h-[18px] leading-[18px]">
                背景
                <Key>B</Key>
              </label>
              <ColorSelect id="background" color="white" />
            </div>
          </div>

          <div className="mt-4 flex items-end justify-between">
            <label className="flex items-center gap-[3px] leading-4 text-[#6d6d6d]">
              <input type="checkbox" disabled className="h-[13px] w-[13px] appearance-none border border-[#b0b0b0] bg-[#fafafa]" />
              <span>
                随图形旋转填充效果
                <span className="font-['Liberation_Mono',monospace] text-[10px]">
                  (<u>W</u>)
                </span>
              </span>
            </label>
            <div className="pr-[2px] pb-[2px]">
              <div className="-ml-1 leading-[20px]">示例:</div>
              <div className="h-[60px] w-[69px] border border-[#1a6fa5]">
                <Hatch rows={hatches[picked].rows} />
              </div>
            </div>
          </div>
        </div>

        <div className="relative mt-2 flex justify-end gap-[10px]">
          <button className="h-5 w-[74px] rounded-[3px] border border-[#707070] bg-linear-to-b from-[#f4f4f4] via-[#ebebeb] to-[#d0d0d0] leading-[18px]">
            确定
          </button>
          <button className="h-5 w-[74px] rounded-[3px] border border-[#707070] bg-linear-to-b from-[#f4f4f4] via-[#ebebeb] to-[#d0d0d0] leading-[18px]">
            取消
          </button>
          <span className="absolute -top-[5px] right-[90px] h-[38px] w-[59px] border-3 border-[#dc3b3f]" />
        </div>
      </div>
    </div>
  );
}

function Watermark() {
  return (
    <div className="pointer-events-none absolute right-[44px] bottom-[20px] w-[142px] font-['Liberation_Sans','Noto_Sans_CJK_SC',sans-serif] text-white/80 [text-shadow:0_0_2px_#8a8a8a]">
      <div className="flex items-end justify-between">
        <span className="text-[32px] leading-8 font-bold">Bai</span>
        <svg width="42" height="46" viewBox="0 0 42 46" fill="#ffffffcc">
          <ellipse cx="6" cy="18" rx="4.5" ry="6" />
          <ellipse cx="16" cy="7.5" rx="5" ry="7" />
          <ellipse cx="28" cy="7.5" rx="5" ry="7" />
          <ellipse cx="37" cy="19" rx="4.5" ry="6" />
          <path d="M21 19c6 0 8 6 13 11 6 6 3 14-4 14-4 0-6-1-9-1s-6 1-10 1c-7 0-9-8-3-14 5-4 7-11 13-11z" />
          <text x="21" y="40" fontSize="18" fontWeight="bold" textAnchor="middle" fill="#5c84ba">
            du
          </text>
        </svg>
        <span className="text-[24px] leading-8">经验</span>
      </div>
      <div className="text-[17px] leading-[18px]">jingyan.baidu.com</div>
    </div>
  );
}

export default function App() {
  return (
    <div
      className={clsx(
        "relative flex min-h-screen flex-col overflow-hidden text-[12px]",
        "bg-linear-to-b from-[#2a86e3] via-[#4cc8ee] via-35% to-[#5fd048] to-70%",
        uiFont,
      )}
    >
      <TitleBar />
      <div className="mx-[4px] mb-1 flex flex-1 flex-col border border-[#2c5c9c] bg-[#bcd8fb]">
        <nav className="flex h-[27px] shrink-0 items-end pl-[60px] text-[#1c4687]">
          <div className="flex h-full items-center gap-[29px]">
            {ribbonTabs.map((t) => (
              <button key={t} className="whitespace-nowrap">
                {t}
              </button>
            ))}
          </div>
          <button className="ml-[20px] h-[26px] w-[56px] rounded-t border border-b-0 border-[#e3c77f] bg-linear-to-b from-[#fde7ae] to-[#fdf2d6]">
            格式
          </button>
          <button aria-label="帮助" className="mr-[3px] mb-[6px] ml-auto flex h-[14px] w-[14px] items-center justify-center rounded-full border border-white bg-[#2d66c0] text-[10px] font-bold text-white outline outline-[#2d66c0]">
            ?
          </button>
        </nav>
        <Ribbon />
        <QuickAccess />
        <Workspace />
        <StatusBar />
      </div>
      <OfficeOrb />
      <FillEffectsDialog />
      <Watermark />
    </div>
  );
}
